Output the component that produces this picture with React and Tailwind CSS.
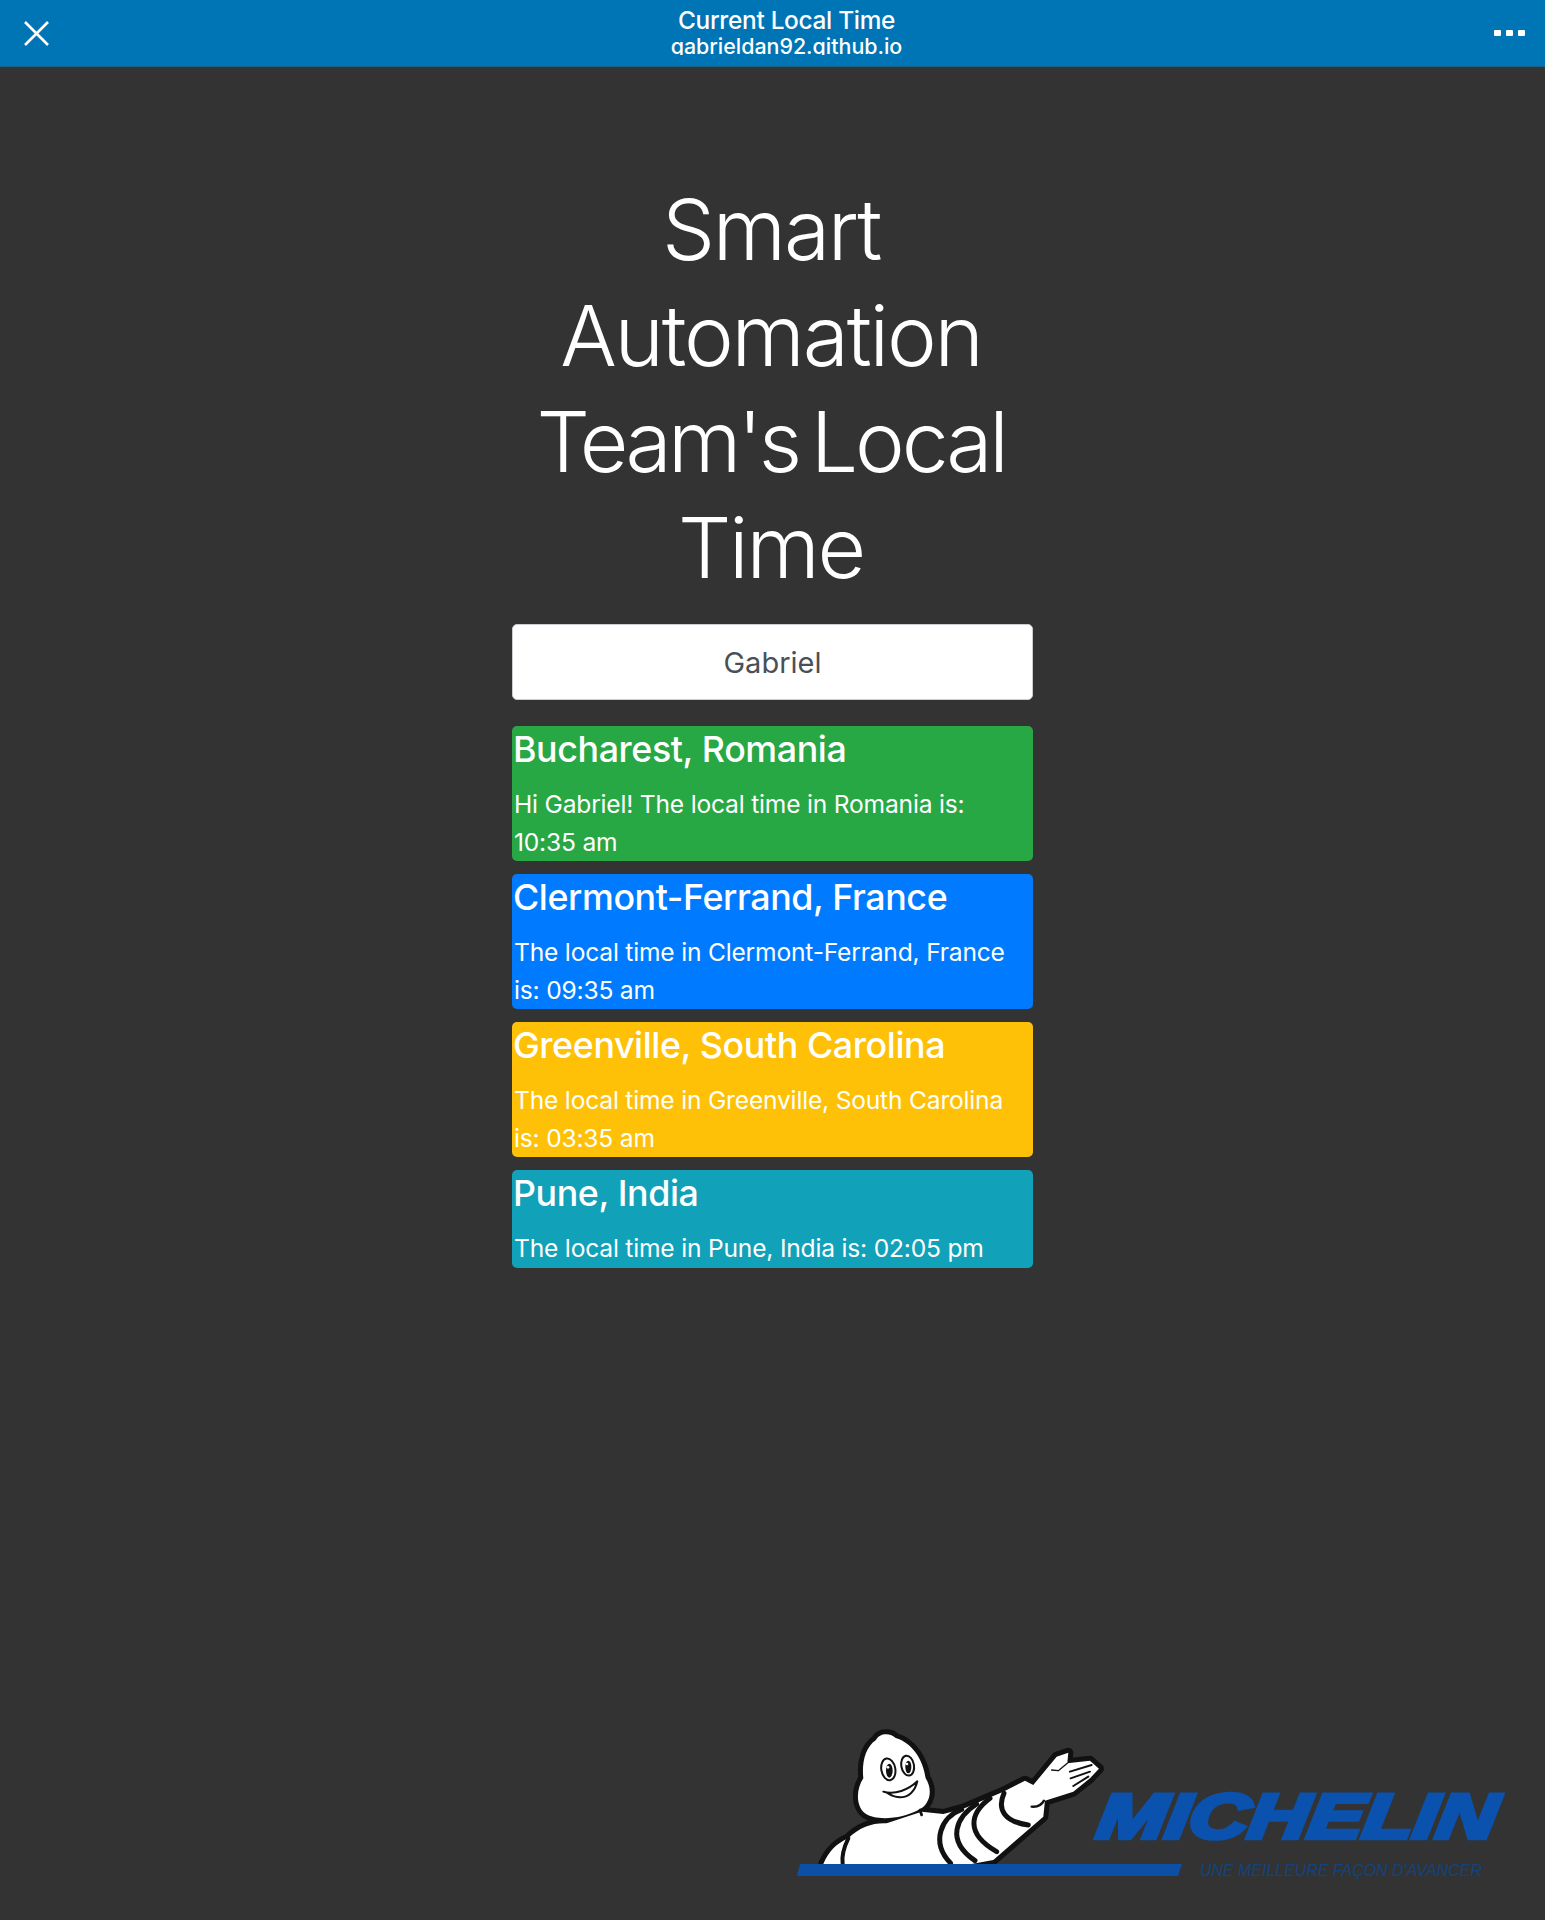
const cards = [
  { city: 'Bucharest, Romania', text: 'Hi Gabriel! The local time in Romania is: 10:35 am', bg: 'bg-[#28a745]' },
  { city: 'Clermont-Ferrand, France', text: 'The local time in Clermont-Ferrand, France is: 09:35 am', bg: 'bg-[#007bff]' },
  { city: 'Greenville, South Carolina', text: 'The local time in Greenville, South Carolina is: 03:35 am', bg: 'bg-[#ffc107]' },
  { city: 'Pune, India', text: 'The local time in Pune, India is: 02:05 pm', bg: 'bg-[#11a1b8]' },
]

function CityCard({ city, text, bg }) {
  return (
    <div className={`${bg} rounded-[5px] pl-[1px] pr-[7px] text-white`}>
      <h4 className="text-[35.8px] font-medium leading-[40px] pt-[3px] mb-[17px] tracking-[-0.4px] whitespace-nowrap">{city}</h4>
      <p className="pl-[1px] text-[24.6px] leading-[37.5px] tracking-[-0.2px]">{text}</p>
    </div>
  )
}

const bodyPath = 'M130 462 C145 425 170 400 205 385 C240 350 280 338 320 340 L425 305 L490 312 L550 296 L670 245 L735 212 L760 225 L830 140 L865 128 L862 160 L930 152 L957 176 L930 205 L880 245 L795 272 L790 320 L640 450 L575 462 Z'
const headPath = 'M288 90 C298 68 332 68 347 84 C397 98 430 150 437 205 C460 240 450 285 415 300 C370 325 290 335 255 310 C225 285 230 235 250 205 C245 160 255 112 288 90 Z'

function MichelinLogo() {
  return (
    <svg width="740" height="190" viewBox="0 0 740 190">
      <g transform="scale(0.3333)" strokeLinejoin="round" strokeLinecap="round">
        <g fill="#111" stroke="#111" strokeWidth="30">
          <path d={bodyPath} />
          <path d={headPath} />
        </g>
        <path d={bodyPath} fill="#fff" />
        <path d={headPath} fill="#fff" />
        <g fill="none" stroke="#111" strokeWidth="15">
          <path d="M545 298 C485 320 450 395 512 460" />
          <path d="M590 282 C530 320 495 390 585 452" />
          <path d="M630 265 C570 310 555 370 650 425" />
          <path d="M672 250 C650 300 675 335 745 345" />
          <path d="M205 385 C190 415 185 440 188 462" strokeWidth="12" />
          <path d="M420 300 L425 315" strokeWidth="8" />
          <path d="M755 290 C775 292 785 285 792 272" strokeWidth="7" />
          <path d="M870 185 L935 165 M872 205 L930 185 M880 228 L925 200" strokeWidth="6" />
          <path d="M815 180 L835 182 L862 160" strokeWidth="4" />
        </g>
        <ellipse cx="325" cy="178" rx="21" ry="33" transform="rotate(-10 325 178)" fill="#fff" stroke="#111" strokeWidth="6" />
        <ellipse cx="383" cy="167" rx="19" ry="30" transform="rotate(-10 383 167)" fill="#fff" stroke="#111" strokeWidth="6" />
        <ellipse cx="328" cy="182" rx="10" ry="21" fill="#111" />
        <ellipse cx="385" cy="171" rx="9" ry="19" fill="#111" />
        <circle cx="324" cy="172" r="4" fill="#fff" />
        <circle cx="381" cy="162" r="4" fill="#fff" />
        <path d="M310 245 C345 255 385 240 412 214 C405 245 385 262 360 262 C340 262 328 252 320 248 Z" fill="#fff" stroke="#111" strokeWidth="6" />
      </g>
      <path d="M20 154 H402 L398 166 H17 Z" fill="#0b4fa6" />
      <text x="315" y="128" transform="skewX(-8) translate(18 0)" fontFamily="Liberation Sans, sans-serif" fontWeight="700" fontStyle="italic" fontSize="63" textLength="399" lengthAdjust="spacingAndGlyphs" fill="#0a52ad" stroke="#0a52ad" strokeWidth="4.5">MICHELIN</text>
      <text x="420" y="166" fontFamily="Liberation Sans, sans-serif" fontStyle="italic" fontSize="17" textLength="282" lengthAdjust="spacingAndGlyphs" fill="#12437f">UNE MEILLEURE FAÇON D'AVANCER</text>
    </svg>
  )
}

function App() {
  return (
    <div className="flex flex-col h-[1920px] bg-[#333333] font-['Inter','Liberation_Sans',sans-serif] overflow-hidden">
      <header className="flex items-start justify-between h-[67px] bg-[#0075b5] border-b border-[#1f5f85] text-white">
        <svg className="mt-[21px] ml-[24px]" width="25" height="25" viewBox="0 0 25 25" stroke="#fff" strokeWidth="2.6" fill="none">
          <path d="M1 1 L24 24 M24 1 L1 24" />
        </svg>
        <div className="ml-[30px] h-[55px] overflow-hidden text-center pt-[7px]">
          <div className="text-[24.4px] font-medium leading-[27px] tracking-[-0.3px]">Current Local Time</div>
          <div className="text-[21.4px] font-medium leading-[24px]">gabrieldan92.github.io</div>
        </div>
        <div className="flex gap-[5px] mt-[30px] mr-[20px]">
          <span className="w-[7px] h-[6px] rounded-[1px] bg-white" />
          <span className="w-[7px] h-[6px] rounded-[1px] bg-white" />
          <span className="w-[7px] h-[6px] rounded-[1px] bg-white" />
        </div>
      </header>

      <main className="w-[521px] ml-[512px] mt-[110px]">
        <h1 className="text-[84px] font-light leading-[106px] text-center text-white tracking-[-2.2px] [word-spacing:-9px] -ml-[13px] -mr-[10px]">
          Smart<br />Automation<br />
          <span className="tracking-[-3.6px]">Team's</span> <span className="tracking-[-3.2px]">Local</span><br />Time
        </h1>
        <div className="flex items-center justify-center h-[76px] mt-[23px] pt-[2px] rounded-[5px] bg-white border border-[#c9ccd0] text-[#495057] text-[29px]">
          Gabriel
        </div>
        <div className="flex flex-col gap-[13px] mt-[26px]">
          {cards.map((c) => <CityCard key={c.city} {...c} />)}
        </div>
      </main>

      <div className="flex justify-end mt-auto pr-[25px] pb-[20px]">
        <MichelinLogo />
      </div>
    </div>
  )
}

export default App
